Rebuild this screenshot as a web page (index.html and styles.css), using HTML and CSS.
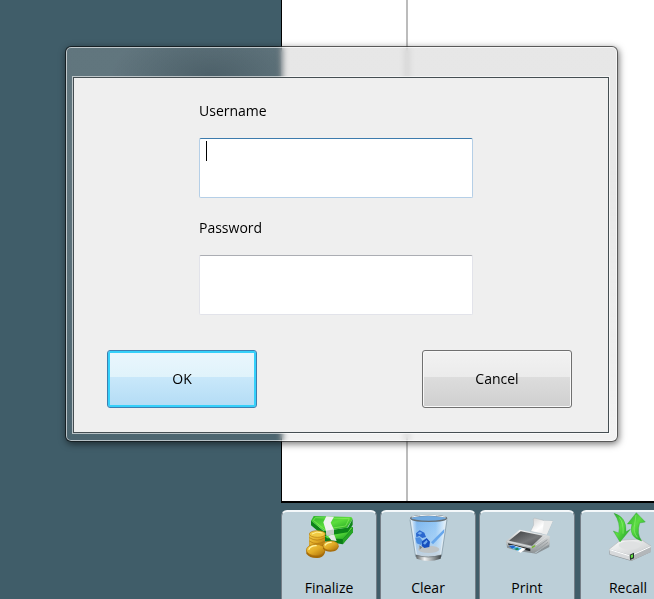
FILE: index.html
```html
<!DOCTYPE html>
<html lang="en">
<head>
<meta charset="utf-8">
<meta name="viewport" content="width=device-width, initial-scale=1">
<title>Sign in</title>
<link rel="stylesheet" href="styles.css">
</head>
<body>
<main class="workspace">
  <section class="receipt"><div class="receipt-items"></div></section>
  <nav class="toolbar" aria-label="Actions">
    <div class="tool-group">
      <button class="tool" type="button">
        <svg class="tool-icon" viewBox="93 57 144 144" aria-hidden="true">
          <defs>
            <linearGradient id="note" x2="1" y2="1"><stop stop-color="#2bb32b"/><stop offset=".5" stop-color="#5cdd3c"/><stop offset="1" stop-color="#159a1c"/></linearGradient>
            <linearGradient id="gold" x2="1" y2="1"><stop stop-color="#f3cf4b"/><stop offset=".5" stop-color="#e2ac26"/><stop offset="1" stop-color="#a86c08"/></linearGradient>
          </defs>
          <path fill="#0b7d17" d="M140 116L150 108L237 96V112L206 148L146 138Z"/>
          <path fill="url(#note)" d="M146 118L237 97L207 132L160 130Z"/>
          <path fill="#27a526" d="M207 133L237 99V112L206 148Z"/>
          <path fill="#0c8518" d="M111 76L151 110L222 98L236 72V90L221 112L150 124L111 91Z"/>
          <path fill="url(#note)" d="M111 77L119 63L232 66L236 72L219 98L150 108Z"/>
          <path fill="none" stroke="#8cf05f" stroke-width="2" d="M118 76L124 68L226 71L215 93L151 103Z"/>
          <path fill="#f0f1f0" d="M157 64L180 65L170 83L180 104V117L158 122L156 108L148 82Z"/>
          <path fill="#c4cbc8" d="M156 107L180 103V117L158 122Z"/>
          <path fill="#e6e8e7" d="M162 122L180 118L188 138L172 136Z"/>
          <path fill="#9c6608" d="M106 119V154H152V119Z"/>
          <path fill="url(#gold)" d="M106 117V150Q130 162 153 148V117Z"/>
          <path fill="none" stroke="#ad7410" stroke-width="2" d="M106 128Q129 143 153 128M106 138Q129 154 153 138"/>
          <ellipse cx="130" cy="117" rx="24" ry="10" fill="#f0ca43" stroke="#b67c12" stroke-width="2"/>
          <path fill="none" stroke="#fff19a" stroke-width="3" d="M114 117Q128 107 145 114"/>
          <path fill="#a46a08" d="M97 165V176Q109 192 137 188Q153 184 154 165Z"/>
          <ellipse cx="125" cy="165" rx="28" ry="17" fill="url(#gold)" stroke="#b37810" stroke-width="2"/>
          <path fill="none" stroke="#fff3a1" stroke-width="4" d="M104 164Q110 151 128 152"/>
          <path fill="#a46a08" d="M147 153V161Q157 173 180 169Q193 165 194 153Z"/>
          <ellipse cx="170" cy="152" rx="23" ry="14" fill="url(#gold)" stroke="#b37810" stroke-width="2"/>
          <path fill="none" stroke="#fff3a1" stroke-width="4" d="M153 151Q158 141 173 142"/>
        </svg>
        <span>Finalize</span>
      </button>
      <button class="tool" type="button">
        <svg class="tool-icon" viewBox="90 57 144 144" aria-hidden="true">
          <defs>
            <linearGradient id="glass" x2="1"><stop stop-color="#eef7fc"/><stop offset=".18" stop-color="#79b4ed"/><stop offset=".7" stop-color="#8dc4f5"/><stop offset="1" stop-color="#edf6fc"/></linearGradient>
            <linearGradient id="steel" x2="1"><stop stop-color="#555b5e"/><stop offset=".35" stop-color="#f3f4f4"/><stop offset=".65" stop-color="#a0a6a8"/><stop offset="1" stop-color="#3d4346"/></linearGradient>
            <linearGradient id="haze" x2="0" y2="1"><stop stop-color="#fff" stop-opacity="0"/><stop offset=".55" stop-color="#e4eef4" stop-opacity=".3"/><stop offset="1" stop-color="#c9cdcf"/></linearGradient>
          </defs>
          <path fill="url(#glass)" d="M109 70L126 188Q162 205 201 188L218 70Z"/>
          <path fill="url(#haze)" d="M109 70L126 188Q162 205 201 188L218 70Z"/>
          <path fill="none" stroke="#deebf3" stroke-width="5" d="M112 77L127 185M215 77L200 185"/>
          <path fill="none" stroke="#778e9d" stroke-width="2" d="M108 74L125 186M219 74L202 186"/>
          <path fill="#67a7ec" d="M171 142L211 102L210 113L177 148Z"/>
          <ellipse cx="164" cy="163" rx="32" ry="11" fill="#bfc4c6"/>
          <path fill="#7e8588" d="M136 151L145 157L137 164Z"/>
          <path fill="#2b68cf" d="M126 115L137 106L151 113L156 126L145 129L136 123L127 127Z"/>
          <path fill="#4b8ce1" d="M124 128L138 127L146 138L141 150L128 145Z"/>
          <path fill="#174fbe" d="M144 139L158 129L168 140L166 156L151 159L143 153Z"/>
          <path fill="#73abed" d="M130 115L138 110L145 114L138 119ZM147 145L158 135L161 140L153 149Z"/>
          <path fill="url(#steel)" d="M125 179Q162 191 202 179L200 191Q163 205 128 191Z"/>
          <path fill="none" stroke="#626b70" stroke-width="2" d="M125 180Q162 192 202 180"/>
          <ellipse cx="164" cy="70" rx="54" ry="9" fill="#70a9df" stroke="#666f74" stroke-width="4"/>
          <path fill="none" stroke="#eef2f4" stroke-width="3" d="M113 66Q160 55 215 66"/>
        </svg>
        <span>Clear</span>
      </button>
      <button class="tool" type="button">
        <svg class="tool-icon" viewBox="87 57 144 144" aria-hidden="true">
          <defs>
            <linearGradient id="paper" x2="1" y2="1"><stop stop-color="#cfcfcf"/><stop offset=".5" stop-color="#fff"/><stop offset="1" stop-color="#d9d9d9"/></linearGradient>
            <linearGradient id="lid" x2="1" y2="1"><stop stop-color="#3a3c3e"/><stop offset=".6" stop-color="#77797b"/><stop offset="1" stop-color="#48494b"/></linearGradient>
            <linearGradient id="case" x2="0" y2="1"><stop stop-color="#f3f4f4"/><stop offset="1" stop-color="#8f9597"/></linearGradient>
          </defs>
          <path fill="#8b9397" d="M98 147L186 174L226 145L226 156L187 176L132 168L99 158Z"/>
          <path fill="url(#case)" d="M95 139L137 104L227 123V148L181 174L98 151Z"/>
          <path fill="url(#paper)" stroke="#a3a7aa" stroke-width="1" d="M178 73L181 69L211 77L236 78L218 119L170 109L179 90Z"/>
          <path fill="#ebecec" d="M210 77L236 78L218 119L205 116Z"/>
          <path fill="url(#lid)" d="M105 137L140 109L206 122L174 152Z"/>
          <path fill="none" stroke="#d9dbdc" stroke-width="3" d="M100 139L176 157L219 125"/>
          <path fill="#24282b" d="M102 145L169 161V169L105 155Z"/>
          <path fill="#fff" d="M102 152L115 150L156 161L140 173Z"/>
          <path fill="#1f66c8" d="M104 153L117 151L127 156L115 161Z"/>
          <path fill="#4fb2e8" d="M115 160L128 155L143 160L132 168Z"/>
          <path fill="#16885e" d="M120 162L130 158L136 163L128 166Z"/>
          <path fill="#77b831" d="M172 156L184 149V154L175 160Z"/>
          <path fill="none" stroke="#9ca1a4" stroke-width="3" d="M187 158L220 134M190 166L222 142"/>
        </svg>
        <span>Print</span>
      </button>
    </div>
    <div class="tool-group">
      <button class="tool" type="button">
        <svg class="tool-icon" viewBox="102 57 144 144" aria-hidden="true">
          <defs>
            <linearGradient id="arrow" x2="1" y2="1"><stop stop-color="#2fae30"/><stop offset=".45" stop-color="#5bdc42"/><stop offset="1" stop-color="#1c9a28"/></linearGradient>
            <linearGradient id="drive" x2="1" y2="1"><stop stop-color="#fff"/><stop offset="1" stop-color="#c4c7c9"/></linearGradient>
          </defs>
          <path fill="#8b9195" d="M117 166L181 190L242 155V171L184 198L119 179Z"/>
          <path fill="url(#drive)" stroke="#b3b7ba" stroke-width="2" d="M117 163L151 136L211 132L243 153L182 182Z"/>
          <path fill="#d7d9db" d="M118 165L182 183V196L120 178Z"/>
          <path fill="#b3b7ba" d="M182 183L243 154V171L184 197Z"/>
          <ellipse cx="179" cy="151" rx="33" ry="12" fill="#dfe1e2"/>
          <path fill="none" stroke="#fff" stroke-width="3" d="M119 164L181 183L242 155"/>
          <path fill="#24322c" d="M179 179L192 173V190L180 195Z"/>
          <path fill="#66e143" d="M182 181L189 178V187L183 190Z"/>
          <path fill="url(#arrow)" stroke="#229a2a" stroke-width="1" d="M132 55Q170 66 168 110L181 103L150 141L130 108L146 114Q153 84 132 55Z"/>
          <path fill="url(#arrow)" stroke="#229a2a" stroke-width="1" d="M199 53L226 81L209 84Q199 116 215 138Q174 126 186 87L172 87Z"/>
          <path fill="none" stroke="#8df073" stroke-width="2" d="M148 67Q162 86 159 116M198 60L194 88Q188 110 202 127"/>
        </svg>
        <span>Recall</span>
      </button>
    </div>
  </nav>
</main>
<div class="dialog" role="dialog" aria-label="Sign in">
  <form class="dialog-body">
    <div class="fields">
      <label for="username">Username</label>
      <input class="field field-active" id="username" type="text">
      <label for="password">Password</label>
      <input class="field" id="password" type="password">
    </div>
    <div class="actions">
      <button class="action action-default" type="submit">OK</button>
      <button class="action" type="button">Cancel</button>
    </div>
  </form>
</div>
</body>
</html>
```
FILE: styles.css
```css
* { box-sizing: border-box; }

body {
  margin: 0;
  overflow: hidden;
  background: #405d69;
  color: #000;
  font: 14px/20px "Open Sans", "Noto Sans", sans-serif;
}

button, input { font: inherit; color: inherit; }

.workspace {
  display: grid;
  grid-template-rows: 1fr 96px;
  height: 100vh;
  padding-left: 281px;
}

.receipt {
  display: flex;
  border-left: 1px solid #000;
  border-bottom: 2px solid #000;
  background: #fff;
}

.receipt-items {
  width: 126px;
  border-right: 2px solid #bcbcbc;
}

.toolbar {
  display: flex;
  gap: 5px;
  padding-top: 7px;
}

.tool-group { display: flex; gap: 3px; }

.tool {
  display: flex;
  flex: none;
  flex-direction: column;
  align-items: center;
  gap: 16px;
  width: 96px;
  height: 96px;
  padding: 2px 0 0;
  border: 1px solid #747e87;
  border-top: 2px solid #f4f8fa;
  border-radius: 6px 6px 0 0;
  background: #bccfd8;
}

.tool-icon { width: 48px; height: 48px; overflow: visible; }

/* Translucent window frame */
.dialog {
  position: absolute;
  top: 46px;
  left: 65px;
  width: 553px;
  padding: 30px 8px 8px 7px;
  border: 1px solid rgba(0, 0, 0, .65);
  border-radius: 6px;
  background:
    radial-gradient(ellipse 100px 50px at 145px 30px, rgba(55, 75, 84, .5), rgba(55, 75, 84, 0)) no-repeat 0 0 / 215px 31px,
    linear-gradient(rgba(175, 175, 175, .3) 30%, rgba(160, 160, 160, .14)) padding-box;
  backdrop-filter: blur(3px);
  box-shadow: inset 0 0 0 1px rgba(255, 255, 255, .6), 1px 2px 7px rgba(0, 0, 0, .55);
}

.dialog-body {
  padding: 23px 36px 24px 33px;
  border: 1px solid #454e52;
  background: #efefef;
  box-shadow: 0 0 0 1px rgba(255, 255, 255, .6);
}

.fields {
  display: flex;
  flex-direction: column;
  padding: 0 99px 0 92px;
}

.field {
  height: 60px;
  margin: 17px 0 20px;
  padding: 2px 6px;
  border: 1px solid #e2e3ea;
  border-top-color: #abadb3;
  border-radius: 2px;
  background: #fff;
  outline: none;
}

.field-active {
  border-color: #b5cfe7;
  border-top-color: #3d7bad;
  background: linear-gradient(#000, #000) no-repeat 6px 2px / 1px 20px #fff;
  caret-color: transparent;
}

.actions {
  display: flex;
  justify-content: space-between;
  padding-top: 15px;
}

.action {
  width: 150px;
  height: 58px;
  border: 1px solid #707070;
  border-radius: 3px;
  background: linear-gradient(#f2f2f2, #ebebeb 46%, #dddddd 46%, #cfcfcf);
  box-shadow: inset 0 0 0 1px #f8f8f8;
}

.action-default {
  border-color: #3c7fb1;
  background: linear-gradient(#eaf6fd, #e0f3fb 46%, #c9e8fa 46%, #b3dcf5);
  box-shadow: inset 0 0 0 2px #35d0fa;
}
```
